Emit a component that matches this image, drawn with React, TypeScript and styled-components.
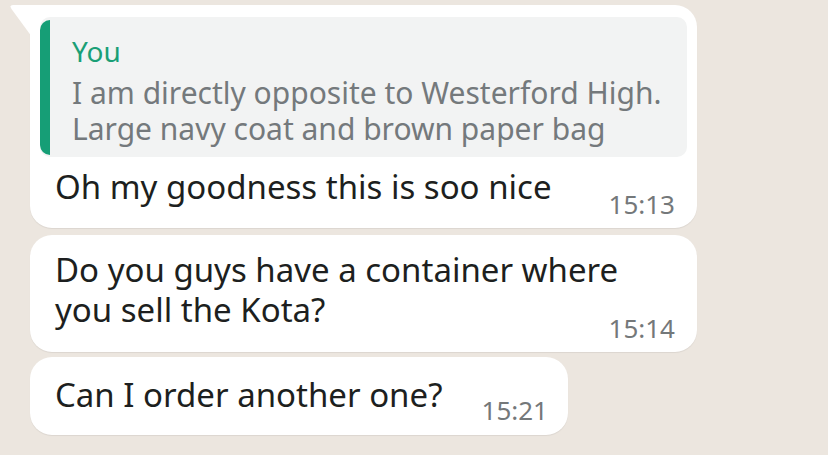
import React from "react";
import styled, { createGlobalStyle } from "styled-components";

const Global = createGlobalStyle`
  html, body { margin: 0; padding: 0; }
  body {
    background: #ece6df;
    font-family: "Noto Sans", "Open Sans", sans-serif;
    width: 828px;
    height: 455px;
    overflow: hidden;
  }
`;

const Chat = styled.div`
  display: flex;
  flex-direction: column;
  align-items: flex-start;
  padding: 5px 0 0 30px;
`;

const Bubble = styled.div<{ $tail?: boolean; $w: number; $mt?: number }>`
  position: relative;
  box-sizing: border-box;
  width: ${(p) => p.$w}px;
  margin-top: ${(p) => p.$mt ?? 0}px;
  background: #ffffff;
  border-radius: ${(p) => (p.$tail ? "0 22px 22px 22px" : "22px")};
  box-shadow: 0 1px 1px rgba(0, 0, 0, 0.07);
  padding: ${(p) => (p.$tail ? "12px 10px 0 10px" : "0")};
`;

const Tail = styled.svg`
  position: absolute;
  left: -20px;
  top: 0;
  width: 22px;
  height: 32px;
`;

const Quote = styled.div`
  display: flex;
  background: #f2f3f3;
  border-radius: 10px;
  overflow: hidden;
  height: 140px;
`;

const QuoteBar = styled.div`
  width: 10px;
  background: #169e76;
  border-radius: 10px 0 0 10px;
  margin: 3px 0 2px;
`;

const QuoteBody = styled.div`
  padding: 17px 0 0 22px;
`;

const QuoteName = styled.div`
  color: #1a9f76;
  font-size: 28px;
  line-height: 34px;
`;

const QuoteText = styled.div`
  margin-top: 7px;
  color: #74797c;
  font-size: 30px;
  line-height: 36px;
  white-space: pre;
`;

const Row = styled.div<{ $pad: string }>`
  display: flex;
  align-items: flex-end;
  justify-content: space-between;
  padding: ${(p) => p.$pad};
`;

const Text = styled.div<{ $mb: number }>`
  flex: 1 1 auto;
  min-width: 0;
  color: #1d1f20;
  font-size: 33px;
  line-height: 40px;
  white-space: pre;
  margin-bottom: ${(p) => p.$mb}px;
`;

const Time = styled.span`
  color: #74787a;
  font-size: 26px;
  line-height: 30px;
  flex-shrink: 0;
`;

export default function App() {
  return (
    <>
      <Global />
      <Chat>
        <Bubble $tail $w={667}>
          <Tail viewBox="0 0 22 32">
            <path d="M22 0 L3 0 Q-1 0 1.5 4 L22 32 Z" fill="#ffffff" />
          </Tail>
          <Quote>
            <QuoteBar />
            <QuoteBody>
              <QuoteName>You</QuoteName>
              <QuoteText>
                {"I am directly opposite to Westerford High.\nLarge navy coat and brown paper bag"}
              </QuoteText>
            </QuoteBody>
          </Quote>
          <Row $pad="10px 12px 9px 15px">
            <Text $mb={12}>Oh my goodness this is soo nice</Text>
            <Time>15:13</Time>
          </Row>
        </Bubble>
        <Bubble $w={667} $mt={7}>
          <Row $pad="15px 22px 9px 25px">
            <Text $mb={13}>{"Do you guys have a container where\nyou sell the Kota?"}</Text>
            <Time>15:14</Time>
          </Row>
        </Bubble>
        <Bubble $w={538} $mt={5}>
          <Row $pad="18px 20px 10px 25px">
            <Text $mb={10}>Can I order another one?</Text>
            <Time>15:21</Time>
          </Row>
        </Bubble>
      </Chat>
    </>
  );
}
